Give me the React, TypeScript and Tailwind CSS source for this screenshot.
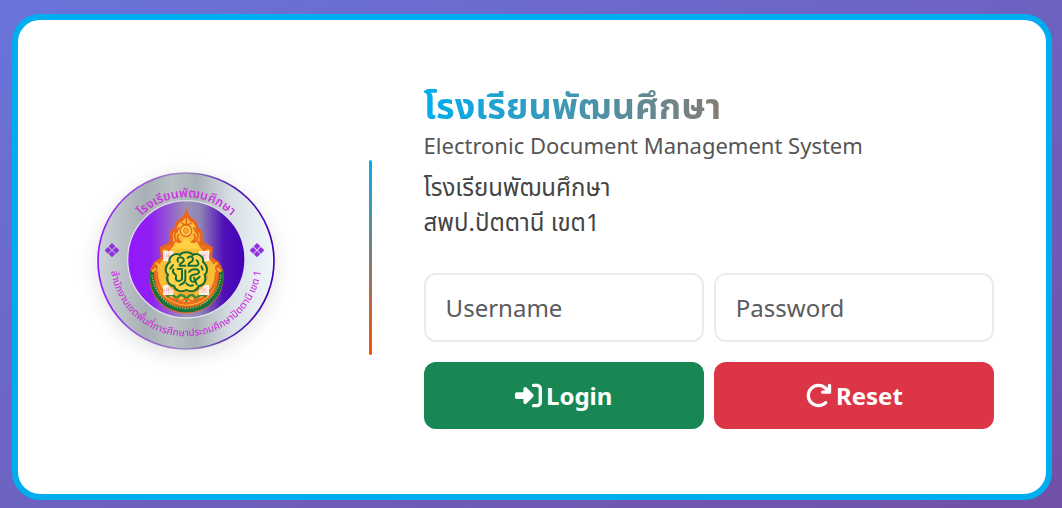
import { FaArrowRotateRight, FaRightToBracket } from 'react-icons/fa6';

const cornerTiles = [
  [267, 289],
  [374, 289],
  [267, 391],
  [374, 391],
];

function SchoolSeal() {
  return (
    <svg
      viewBox="53 37 534 534"
      role="img"
      aria-label="โรงเรียนพัฒนศึกษา"
      className="h-[178px] w-[178px] overflow-visible rounded-full drop-shadow-[0_5px_10px_rgba(0,0,0,0.12)]"
    >
      <defs>
        <linearGradient id="silver">
          <stop offset="0" stopColor="#ced3da" />
          <stop offset="0.27" stopColor="#a7b0b4" />
          <stop offset="0.42" stopColor="#b9c1c3" />
          <stop offset="0.56" stopColor="#a9b2b6" />
          <stop offset="0.76" stopColor="#d8e0e5" />
          <stop offset="1" stopColor="#f0f7fb" />
        </linearGradient>
        <linearGradient id="violet">
          <stop offset="0" stopColor="#9416ff" />
          <stop offset="0.2" stopColor="#9020ef" />
          <stop offset="0.5" stopColor="#9b91b5" />
          <stop offset="0.62" stopColor="#8f82b7" />
          <stop offset="0.82" stopColor="#5010b8" />
          <stop offset="1" stopColor="#4300b5" />
        </linearGradient>
        <linearGradient id="rim">
          <stop offset="0" stopColor="#9416ff" />
          <stop offset="0.5" stopColor="#9a8db8" />
          <stop offset="0.8" stopColor="#4b10b5" />
          <stop offset="1" stopColor="#4300b5" />
        </linearGradient>
        <path id="arc-top" d="M131 303A190 190 0 0 1 511 303" />
        <path id="arc-bottom" d="M93 303A227 227 0 0 0 547 303" />
      </defs>

      <circle cx="320" cy="304" r="264" fill="url(#silver)" stroke="url(#rim)" strokeWidth="5" />
      <circle cx="321" cy="299" r="176" fill="url(#violet)" stroke="#dfe0ec" strokeWidth="4" />

      <g fill="#cb35dc" fontFamily="'Noto Sans Thai', 'Noto Sans', sans-serif">
        <text fontSize="37" fontWeight="600">
          <textPath href="#arc-top" startOffset="50%" textAnchor="middle">โรงเรียนพัฒนศึกษา</textPath>
        </text>
        <text fontSize="30" fontWeight="500">
          <textPath href="#arc-bottom" startOffset="50%" textAnchor="middle">
            สำนักงานเขตพื้นที่การศึกษาประถมศึกษาปัตตานี เขต 1
          </textPath>
        </text>
      </g>

      {[98, 533].map((x) => (
        <path
          key={x}
          fill="#9131dc"
          d={`M${x} 250l10 10-10 10-10-10zM${x} 273l10 10-10 10-10-10zM${x - 12} 262l10 10-10 10-10-10zM${x + 12} 262l10 10-10 10-10-10z`}
        />
      ))}

      {/* spire and body */}
      <path
        d="M321 142C323 160 331 171 342 178C356 187 356 197 357 205L368 212C372 225 367 238 373 248L401 263L398 292L419 307L433 335C438 411 389 460 321 461C253 460 205 411 210 335L224 307L245 292L241 263L269 248C275 238 270 225 274 212L285 205C286 197 286 187 300 178C311 171 319 160 321 142Z"
        fill="#e8651d"
      />
      <path
        d="M321 165C324 178 331 183 339 188C350 196 348 207 351 214L360 220C362 235 357 246 366 257L393 272L389 294L405 318C424 370 397 435 321 438C247 435 218 370 237 318L253 294L249 272L276 257C285 246 280 235 282 220L291 214C294 207 292 196 303 188C311 183 318 178 321 165Z"
        fill="#f8be38"
      />
      <path
        d="M321 171V191M307 190C314 197 328 197 335 190M294 214C280 226 286 242 299 248M348 214C362 226 356 242 343 248M298 224C290 235 298 243 307 249M344 224C352 235 344 243 335 249M299 205L288 219M343 205L354 219M287 245L276 259M355 245L366 259"
        fill="none"
        stroke="#e8651d"
        strokeWidth="5"
        strokeLinecap="round"
      />
      <circle cx="320" cy="213" r="17" fill="#ffd44c" stroke="#e8651d" strokeWidth="4" />
      <circle cx="320" cy="213" r="8" fill="#f6a92f" stroke="#e98523" strokeWidth="3" />
      <path d="M321 235L336 249L350 252L363 267H278L292 252L306 249Z" fill="#ffd142" />
      <path d="M258 269L276 262L264 277M384 269L366 262L378 277M247 294L233 314M395 294L410 314" fill="none" stroke="#f06b1f" strokeWidth="6" />

      {/* lower green band */}
      <path d="M216 333C216 405 255 449 321 451C387 449 427 405 427 333" fill="none" stroke="#17733c" strokeWidth="14" />
      <path
        d="M218 346C225 400 262 444 321 447C379 444 419 400 425 346"
        fill="none"
        stroke="#d8b44a"
        strokeWidth="4"
        strokeDasharray="4 4"
      />
      <path d="M232 333C230 384 264 429 321 431C378 429 413 384 411 333" fill="none" stroke="#f06b1f" strokeWidth="8" />
      <path
        d="M263 412C275 397 287 410 292 418C303 397 315 406 321 420C327 406 339 397 350 418C356 410 368 397 380 412"
        fill="none"
        stroke="#418a38"
        strokeWidth="8"
      />
      <path d="M277 423Q291 409 302 426Q321 411 340 426Q353 409 366 423" fill="none" stroke="#ee6b24" strokeWidth="5" />
      <path d="M230 326L218 336M229 310Q246 318 236 338M413 326L425 336M414 310Q397 318 407 338" fill="none" stroke="#f8be38" strokeWidth="6" />

      {cornerTiles.map(([x, y]) => (
        <g key={`${x}-${y}`}>
          <path d={`M${x - 15} ${y - 15}h30v30h-30z`} fill="#fff3ee" />
          <path
            d={`M${x - 10} ${y - 10}l20 20m0-20l-20 20M${x} ${y - 13}v26M${x - 13} ${y}h26`}
            stroke="#ec9da0"
            strokeWidth="3"
            strokeDasharray="3 3"
          />
        </g>
      ))}

      {/* centre rosette with the monogram */}
      <circle cx="321" cy="340" r="65" fill="#f6a72c" />
      <path
        d="M302 286C309 275 333 275 340 286C356 278 375 291 371 307C386 318 386 337 376 345C383 361 374 378 358 379C354 394 335 399 321 391C307 399 288 394 284 379C268 378 259 361 266 345C256 337 256 318 271 307C267 291 286 278 302 286Z"
        fill="#ffd449"
        stroke="#176e35"
        strokeWidth="6"
      />
      <path
        d="M296 306C289 291 309 289 313 299C317 312 299 307 301 318H318M325 295C330 286 345 292 340 302C335 312 327 305 327 318H350M352 302C360 307 359 319 350 318M282 329C275 344 293 341 290 351C287 365 300 368 308 359V333M295 328H308M318 332V358C318 371 307 373 302 376M329 337C339 324 360 327 359 338C357 348 334 340 333 353C332 367 343 370 349 362L361 351M344 354L352 374M321 371C326 379 336 379 341 377M281 316L273 327M366 320L370 330"
        fill="none"
        stroke="#176e35"
        strokeWidth="6"
        strokeLinecap="round"
        strokeLinejoin="round"
      />
    </svg>
  );
}

const fieldClass =
  'h-[69px] w-full min-w-0 rounded-xl border-2 border-[#e9ecef] bg-white px-5 text-[24px] text-[#212529] outline-none placeholder:text-[#595c5f] focus:border-[#00aeef]';

const buttonClass =
  'flex h-[67px] items-center justify-center gap-1 rounded-xl text-[24px] font-bold text-white transition-all hover:brightness-110';

export default function App() {
  return (
    <div className="flex min-h-screen bg-linear-to-br/srgb from-[#6a74da] to-[#7150a7] pt-3.5 pr-2.5 pb-2 pl-3 font-['Noto_Sans','Noto_Sans_Thai',sans-serif]">
      <main className="flex w-full items-center rounded-[28px] border-[6px] border-[#00aeef] bg-white pr-[52px]">
        <div className="flex w-[35%] shrink-0 justify-center pt-2 pr-1.5">
          <SchoolSeal />
        </div>

        <div className="ml-[9px] h-[195px] w-[3px] shrink-0 rounded-full bg-linear-to-b/srgb from-[#00aeef] to-[#ff4e00]" />

        <section className="ml-[52px] min-w-0 flex-1 pb-0.5">
          <h1 className="bg-linear-to-r/srgb from-[#00aeef] to-[#ff4e00] bg-clip-text text-[36px] leading-[46px] font-bold text-transparent">
            โรงเรียนพัฒนศึกษา
          </h1>
          <p className="text-[22px] leading-8 whitespace-nowrap text-[#555]">Electronic Document Management System</p>
          <p className="mt-2 text-[24px] leading-[35px] text-[#444]">
            โรงเรียนพัฒนศึกษา
            <br />
            สพป.ปัตตานี เขต1
          </p>

          <form className="mt-[34px]" onSubmit={(e) => e.preventDefault()}>
            <div className="grid grid-cols-2 gap-2.5">
              <input type="text" name="username" placeholder="Username" aria-label="Username" className={fieldClass} />
              <input type="password" name="password" placeholder="Password" aria-label="Password" className={fieldClass} />
            </div>
            <div className="mt-5 grid grid-cols-2 gap-2.5">
              <button type="submit" className={`${buttonClass} bg-[#198754]`}>
                <FaRightToBracket className="h-[27px] w-[27px]" />
                Login
              </button>
              <button type="reset" className={`${buttonClass} bg-[#dc3545]`}>
                <FaArrowRotateRight className="h-[27px] w-[27px]" />
                Reset
              </button>
            </div>
          </form>
        </section>
      </main>
    </div>
  );
}
